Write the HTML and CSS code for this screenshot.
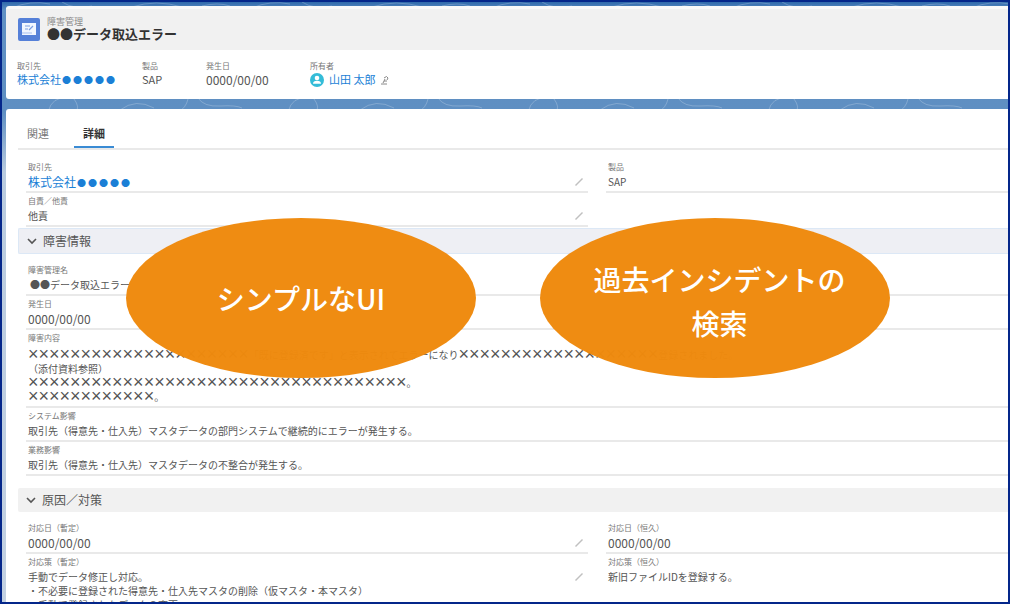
FILE: index.html
```
<!DOCTYPE html>
<html lang="ja">
<head>
<meta charset="utf-8">
<title>●●データ取込エラー</title>
<link rel="stylesheet" href="styles.css">
</head>
<body>
<svg class="defs" aria-hidden="true">
  <symbol id="pencil" viewBox="0 0 10 10"><path d="M1.5 8.5 L8.5 1.5" stroke="#c0c0c0" stroke-width="1.5" fill="none"/></symbol>
  <symbol id="chevron" viewBox="0 0 10 8"><path d="M1 2 L5 6 L9 2" stroke="#555" stroke-width="1.6" fill="none"/></symbol>
</svg>
<main class="frame">
  <svg class="waves" aria-hidden="true">
    <defs>
      <pattern id="contours" width="240" height="110" patternUnits="userSpaceOnUse">
        <g fill="none" stroke="#fff" stroke-opacity=".22">
          <path d="M46 110q4-16 20-14M72 97q6 8 2 13M118 108q16-12 34-2M176 110q8-4 10-13M196 96q6 9 22 8t22 2"/>
          <path d="M10 6q18-8 38-4M60 0q12 8 30 4M130 5q24-8 50 0M200 4q16-4 28 0"/>
        </g>
      </pattern>
    </defs>
    <rect width="100%" height="110" fill="url(#contours)"/>
  </svg>
  <header class="card summary">
    <div class="summary-head">
      <svg class="object-icon" viewBox="0 0 22 23" aria-hidden="true">
        <rect width="22" height="23" rx="2" fill="#5580d8"/>
        <path d="M4 5h14v12H4z" fill="#f2f6ff"/>
        <path d="M7 8h5M7 11h3M11 12l4-4" stroke="#7d9de2" stroke-width="1.2" fill="none"/>
        <path d="M4 15h10" stroke="#a9c0ee" stroke-width="1"/>
      </svg>
      <div>
        <p class="object-name">障害管理</p>
        <h1 class="record-title">●●データ取込エラー</h1>
      </div>
    </div>
    <dl class="highlights">
      <div><dt>取引先</dt><dd><a href="#account">株式会社<span class="dots">● ● ● ● ●</span></a></dd></div>
      <div><dt>製品</dt><dd>SAP</dd></div>
      <div><dt>発生日</dt><dd class="date">0000/00/00</dd></div>
      <div><dt>所有者</dt><dd class="owner">
        <svg class="avatar" viewBox="0 0 14 14" aria-hidden="true"><circle cx="7" cy="7" r="7" fill="#34bcd8"/><circle cx="7" cy="5" r="2.3" fill="#fff"/><path d="M3 10.800q0-3 4-3t4 3z" fill="#fff"/></svg>
        <a href="#owner">山田 太郎</a>
        <button class="icon-button" aria-label="所有者を変更"><svg class="owner-icon" viewBox="0 0 10 10"><path d="M4 3q3-3 4 0l-1 2M5 4L3 8M1 9h6M4 6h3" stroke="#888" fill="none"/></svg></button>
      </dd></div>
    </dl>
  </header>

  <section class="card details">
    <nav class="tabs">
      <a class="tab" href="#related">関連</a>
      <a class="tab is-active" href="#details" aria-current="page">詳細</a>
    </nav>

    <div class="columns first">
      <dl>
        <div class="field"><dt>取引先</dt><dd class="account"><a href="#account">株式会社<span class="dots">● ● ● ● ●</span></a><button class="icon-button" aria-label="取引先を編集"><svg class="pencil"><use href="#pencil"/></svg></button></dd></div>
        <div class="field"><dt>自責／他責</dt><dd>他責<button class="icon-button" aria-label="自責／他責を編集"><svg class="pencil"><use href="#pencil"/></svg></button></dd></div>
      </dl>
      <dl>
        <div class="field"><dt>製品</dt><dd>SAP</dd></div>
      </dl>
    </div>

    <h2 class="section-title is-focused"><button><svg class="chevron"><use href="#chevron"/></svg>障害情報</button></h2>
    <dl class="incident">
      <div class="field"><dt>障害管理名</dt><dd class="name">●●データ取込エラー</dd></div>
      <div class="field"><dt>発生日</dt><dd class="date">0000/00/00</dd></div>
      <div class="field"><dt>障害内容</dt><dd class="text description"><p><span class="mask">×××××××××××××××××××××</span>「既に登録済です」と表示されてエラーになり<span class="mask">×××××××××××××××××××</span>登録されました。</p><p>（添付資料参照）</p><p><span class="mask">××××××××××××××××××××××××××××××××××××</span>。</p><p><span class="mask">××××××××××××</span>。</p></dd></div>
      <div class="field"><dt>システム影響</dt><dd>取引先（得意先・仕入先）マスタデータの部門システムで継続的にエラーが発生する。</dd></div>
      <div class="field"><dt>業務影響</dt><dd>取引先（得意先・仕入先）マスタデータの不整合が発生する。</dd></div>
    </dl>

    <h2 class="section-title"><button><svg class="chevron"><use href="#chevron"/></svg>原因／対策</button></h2>
    <div class="columns last">
      <dl>
        <div class="field"><dt>対応日（暫定）</dt><dd class="date">0000/00/00<button class="icon-button" aria-label="対応日を編集"><svg class="pencil"><use href="#pencil"/></svg></button></dd></div>
        <div class="field"><dt>対応策（暫定）</dt><dd class="text action"><div><p>手動でデータ修正し対応。</p><p>・不必要に登録された得意先・仕入先マスタの削除（仮マスタ・本マスタ）</p><p>・手動で登録されたデータの変更</p></div><button class="icon-button" aria-label="対応策を編集"><svg class="pencil"><use href="#pencil"/></svg></button></dd></div>
      </dl>
      <dl>
        <div class="field"><dt>対応日（恒久）</dt><dd class="date">0000/00/00</dd></div>
        <div class="field"><dt>対応策（恒久）</dt><dd class="text">新旧ファイルIDを登録する。</dd></div>
      </dl>
    </div>
  </section>

  <div class="callouts">
    <p class="callout">シンプルなUI</p>
    <p class="callout callout-search">過去インシデントの<br>検索</p>
  </div>
</main>
</body>
</html>
```
FILE: styles.css
```
* { box-sizing: border-box; }

body, h1, h2, p, dl, dt, dd { margin: 0; }

body {
  font-family: "Noto Sans CJK JP", sans-serif;
  font-size: 10px;
  color: #555;
}

a { color: #1b7fd6; text-decoration: none; }

button {
  border: 0;
  padding: 0;
  background: none;
  font: inherit;
  color: inherit;
}

.defs { position: absolute; width: 0; height: 0; }

.frame {
  position: relative;
  height: 100vh;
  overflow: hidden;
  border: 2px solid #04268a;
  padding: 4px 0 0 4px;
  background: linear-gradient(#2f69ab, #5f90c4 8px, #5f8fc2 110px, #b9cbdf 170px, #c3d1e2);
}

.waves {
  position: absolute;
  inset: 0;
  width: 100%;
  height: 110px;
}

.card {
  position: relative;
  background: #fff;
  border-top-left-radius: 3px;
}

.summary {
  margin-bottom: 10px;
  border-top: 3px solid #f9f9f9;
  border-bottom-left-radius: 3px;
}

.summary-head {
  display: flex;
  align-items: center;
  gap: 7px;
  height: 41px;
  padding-left: 12px;
  background: #f1f1f1;
}

.object-icon { width: 22px; height: 23px; }

.object-name { font-size: 9px; line-height: 11px; color: #888; }

.record-title {
  padding-bottom: 3px;
  font-size: 13px;
  font-weight: 700;
  line-height: 13px;
  color: #333;
}

.highlights {
  display: grid;
  grid-template-columns: 125px 64px 104px 1fr;
  padding: 10px 0 12px 11px;
}

dt { font-size: 8px; line-height: 12px; color: #777; }
dd { line-height: 18px; }

.highlights dd { line-height: 15px; font-size: 11px; }
dd.date, .highlights .date { font-size: 12px; }

.dots { padding-left: 1px; font-size: 9px; line-height: 0; vertical-align: 1px; }

.owner { display: flex; align-items: center; gap: 5px; }
.avatar { width: 14px; height: 14px; }
.owner-icon { display: block; width: 10px; height: 10px; }

.details { padding: 8px 0 0 12px; }

.tabs {
  display: flex;
  gap: 16px;
  border-bottom: 2px solid #e9e9e9;
}

.tab {
  width: 40px;
  padding: 5px 0 2px;
  border-bottom: 2px solid transparent;
  font-size: 11px;
  line-height: 22px;
  text-align: center;
  color: #777;
}

.tab.is-active {
  border-color: #3a8bd4;
  font-weight: 700;
  color: #333;
}

.columns {
  display: grid;
  grid-template-columns: 562fr 402fr;
  gap: 18px;
  padding: 8px 0 0 8px;
}

.columns.first { padding: 9px 0 1px 8px; }

.incident { padding: 8px 0 0 8px; }

.field {
  padding: 2px 0 0 2px;
  border-bottom: 2px solid #e9e9e9;
}

.last .field:last-child { border-bottom: 0; }

.field dd { display: flex; justify-content: space-between; }
.field .account { font-size: 12px; }
.field .name { padding-left: 2px; }

.field .text { padding-top: 2px; line-height: 14px; }
.field .description { display: block; padding: 4px 0 2px; white-space: nowrap; }

.text p { height: 14px; }

.mask {
  font-family: "Liberation Sans", sans-serif;
  font-size: 18px;
  line-height: 0;
  vertical-align: -1px;
}

.icon-button { align-self: flex-start; margin: 4px 4px 0 0; }
.owner .icon-button { align-self: center; margin: 0; }
.text .icon-button { margin-top: 2px; }
.pencil { display: block; width: 10px; height: 10px; }

.section-title {
  background: #f1f1f1;
  border-radius: 2px 0 0 2px;
  font-size: 12px;
  font-weight: 400;
  line-height: 24px;
}

.section-title.is-focused {
  border: 1px solid #dce8f6;
  border-right: 0;
  background: #eeeff4;
}

.section-title button {
  display: flex;
  align-items: center;
  gap: 6px;
  padding-left: 8px;
}

.incident + .section-title { margin-top: 12px; }

.chevron { width: 10px; height: 8px; }

.callouts {
  position: absolute;
  top: 216px;
  left: 124px;
  display: flex;
  gap: 64px;
}

.callout {
  display: flex;
  align-items: center;
  justify-content: center;
  width: 350px;
  height: 160px;
  border-radius: 50%;
  background: rgba(239, 138, 13, .98);
  font-size: 28px;
  font-weight: 500;
  line-height: 44px;
  text-align: center;
  color: #fff;
}

.callout-search { padding: 6px 0 0 9px; }
```
